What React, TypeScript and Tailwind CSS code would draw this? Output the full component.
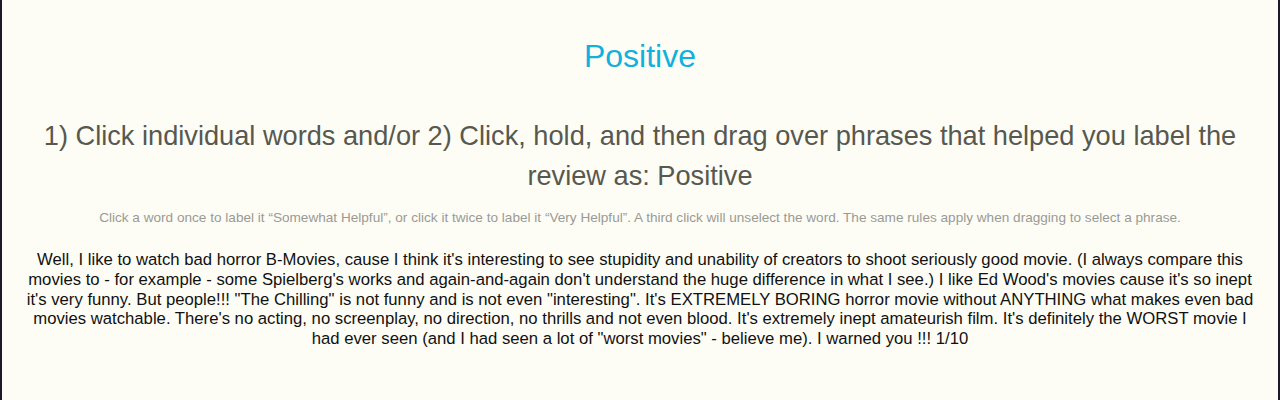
export default function App() {
  return (
    <div className="w-[1280px] h-[400px] bg-[#fdfdf6] border-l-2 border-r-2 border-[#1a1a2a] overflow-hidden" style={{ fontFamily: '"Liberation Sans", Arial, sans-serif' }}>
      <div className="flex flex-col items-center text-center px-[24px]">
        <h1 className="mt-[36px] text-[32px] leading-[40px] text-[#12b0dc]">Positive</h1>
        <h2 className="mt-[40px] text-[27.2px] leading-[40px] text-[#58584f]">
          1) Click individual words and/or 2) Click, hold, and then drag over phrases that helped you label the review as: Positive
        </h2>
        <p className="mt-[14px] text-[13.6px] leading-[16px] text-[#9a9a94]">
          Click a word once to label it “Somewhat Helpful”, or click it twice to label it “Very Helpful”. A third click will unselect the word. The same rules apply when dragging to select a phrase.
        </p>
        <p className="mt-[24px] text-[16.7px] leading-[19.75px] text-[#111111]">
          Well, I like to watch bad horror B-Movies, cause I think it's interesting to see stupidity and unability of creators to shoot seriously good movie. (I always compare this movies to - for example - some Spielberg's works and again-and-again don't understand the huge difference in what I see.) I like Ed Wood's movies cause it's so inept it's very funny. But people!!! "The Chilling" is not funny and is not even "interesting". It's EXTREMELY BORING horror movie without ANYTHING what makes even bad movies watchable. There's no acting, no screenplay, no direction, no thrills and not even blood. It's extremely inept amateurish film. It's definitely the WORST movie I had ever seen (and I had seen a lot of "worst movies" - believe me). I warned you !!! 1/10
        </p>
      </div>
    </div>
  );
}
